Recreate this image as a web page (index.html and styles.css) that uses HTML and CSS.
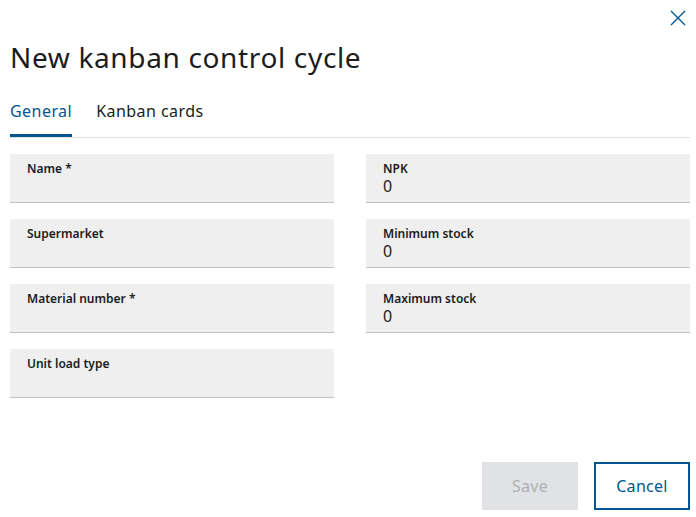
FILE: index.html
```html
<!DOCTYPE html>
<html lang="en">
<head>
<meta charset="utf-8">
<title>New kanban control cycle</title>
<link rel="stylesheet" href="styles.css">
</head>
<body>
<div class="dialog">
  <div class="close-row">
    <button class="close" aria-label="Close">
      <svg width="16" height="16" viewBox="0 0 16 16"><path d="M1 1 L15 15 M15 1 L1 15" stroke="#005691" stroke-width="1.4" fill="none"/></svg>
    </button>
  </div>
  <h1 class="title">New kanban control cycle</h1>
  <div class="tabs">
    <div class="tab active">General</div>
    <div class="tab">Kanban cards</div>
  </div>
  <div class="form">
    <div class="col">
      <div class="field"><div class="label">Name *</div><div class="value"></div></div>
      <div class="field"><div class="label">Supermarket</div><div class="value"></div></div>
      <div class="field"><div class="label">Material number *</div><div class="value"></div></div>
      <div class="field"><div class="label">Unit load type</div><div class="value"></div></div>
    </div>
    <div class="col">
      <div class="field"><div class="label">NPK</div><div class="value">0</div></div>
      <div class="field"><div class="label">Minimum stock</div><div class="value">0</div></div>
      <div class="field"><div class="label">Maximum stock</div><div class="value">0</div></div>
    </div>
  </div>
  <div class="footer">
    <button class="btn save" disabled>Save</button>
    <button class="btn cancel">Cancel</button>
  </div>
</div>
</body>
</html>
```
FILE: styles.css
```css
html, body {
  margin: 0;
  padding: 0;
  background: #ffffff;
}
body {
  font-family: "Noto Sans", "Open Sans", sans-serif;
  color: #1a1c1d;
}
.dialog {
  padding: 0 6px 0 10px;
}
.close-row {
  display: flex;
  justify-content: flex-end;
  height: 36px;
  padding-top: 10px;
  box-sizing: border-box;
}
.close {
  width: 16px;
  height: 16px;
  padding: 0;
  margin-right: 4px;
  border: 0;
  background: none;
  display: flex;
}
.title {
  margin: 1px 0 0 0;
  font-size: 28px;
  font-weight: 400;
  line-height: 40px;
  height: 40px;
  letter-spacing: 0.65px;
}
.tabs {
  margin-top: 11px;
  display: flex;
  gap: 24px;
  border-bottom: 1px solid #dfdfe0;
}
.tab {
  font-size: 16px;
  line-height: 24px;
  padding: 11px 0;
  border-bottom: 3px solid transparent;
  color: #1a1c1d;
  letter-spacing: 0.45px;
}
.tab.active {
  color: #005691;
  border-bottom-color: #005691;
}
.form {
  margin-top: 16px;
  display: grid;
  grid-template-columns: 324px 324px;
  column-gap: 32px;
  align-items: start;
}
.col {
  display: flex;
  flex-direction: column;
  gap: 16px;
}
.field {
  background: #efefef;
  border-bottom: 1px solid #bfc0c2;
  padding: 7px 16px 0 17px;
  box-sizing: border-box;
  height: 49px;
}
.label {
  font-size: 12px;
  font-weight: 600;
  line-height: 16px;
}
.value {
  font-size: 16px;
  line-height: 18px;
}
.footer {
  margin-top: 64px;
  display: flex;
  justify-content: flex-end;
  gap: 16px;
}
.btn {
  width: 96px;
  height: 48px;
  font-family: "Noto Sans", "Open Sans", sans-serif;
  font-size: 16px;
  box-sizing: border-box;
  letter-spacing: 0.3px;
}
.save {
  background: #e0e2e5;
  color: #aeb0b2;
  border: 0;
}
.cancel {
  background: #ffffff;
  color: #005691;
  border: 2px solid #005691;
}
```
